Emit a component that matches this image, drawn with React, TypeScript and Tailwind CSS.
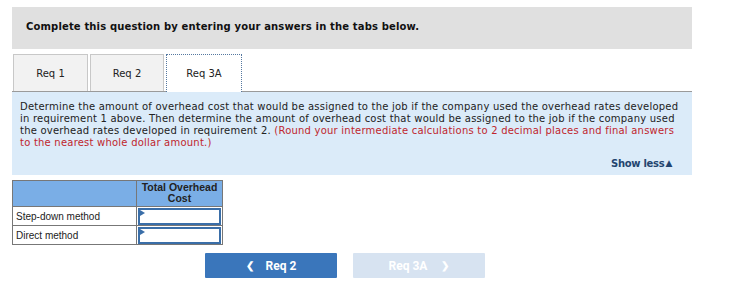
import React from "react";

export default function App() {
  const verdana = { fontFamily: '"DejaVu Sans", Verdana, sans-serif' };
  return (
    <div className="w-[730px] h-[288px] bg-white relative overflow-hidden">
      <div className="pt-[7px] pl-[12px] w-[692px]">
        <div className="h-[42px] bg-[#e0e0e0] flex items-center pl-[14px] pb-[4px]">
          <span className="text-[10px] font-bold text-[#111] tracking-[0.15px]" style={verdana}>
            Complete this question by entering your answers in the tabs below.
          </span>
        </div>
        <div className="mt-[5px] flex items-end h-[38px] border-b border-[#9a9a9a] pl-[1px] gap-[2px]">
          <div className="w-[75px] h-[37px] bg-[#f2f2f2] border border-b-0 border-[#c8c8c8] flex items-center justify-center text-[10px] text-[#222]" style={verdana}>Req 1</div>
          <div className="w-[74px] h-[37px] bg-[#f2f2f2] border border-b-0 border-[#c8c8c8] flex items-center justify-center text-[10px] text-[#222]" style={verdana}>Req 2</div>
          <div className="w-[76px] h-[38px] mb-[-1px] bg-white border border-b-0 border-dotted border-[#5578a0] flex items-center justify-center text-[10px] text-[#222]" style={verdana}>Req 3A</div>
        </div>
        <div className="bg-[#dbebf9] h-[83px] pl-[8px] pr-[10px] pt-[9px] relative">
          <p className="text-[10px] leading-[12px] text-[#222] tracking-[0.22px]" style={verdana}>
            Determine the amount of overhead cost that would be assigned to the job if the company used the overhead rates developed in requirement 1 above. Then determine the amount of overhead cost that would be assigned to the job if the company used the overhead rates developed in requirement 2.{" "}
            <span className="text-[#c0262d]">(Round your intermediate calculations to 2 decimal places and final answers to the nearest whole dollar amount.)</span>
          </p>
          <div className="absolute right-[20px] top-[64px] flex items-center text-[10px] font-bold text-[#23456f] tracking-[-0.3px]" style={verdana}>
            Show less<span className="text-[9px] ml-[1px]">▲</span>
          </div>
        </div>
        <div className="mt-[5px]">
          <table className="border-collapse text-[10px] text-[#222]" style={{ fontFamily: '"Liberation Sans", Arial, sans-serif' }}>
            <tbody>
              <tr className="h-[26px] bg-[#7aaee6]">
                <td className="w-[124px] border border-[#777]"></td>
                <td className="w-[86px] border border-[#777] text-center font-bold text-[10.5px] leading-[11px] align-top pt-[1px]">Total Overhead<br />Cost</td>
              </tr>
              <tr className="h-[19px]">
                <td className="border border-[#777] pl-[3px]">Step-down method</td>
                <td className="border border-[#777] p-0">
                  <div className="h-[17px] border-2 border-[#3a6ea8] mx-[1px] relative bg-white">
                    <span className="absolute left-0 top-0 w-0 h-0 border-t-[3px] border-b-[3px] border-l-[5px] border-t-transparent border-b-transparent border-l-[#3a6ea8]"></span>
                  </div>
                </td>
              </tr>
              <tr className="h-[19px]">
                <td className="border border-[#777] pl-[3px]">Direct method</td>
                <td className="border border-[#777] p-0">
                  <div className="h-[17px] border-2 border-[#3a6ea8] mx-[1px] relative bg-white">
                    <span className="absolute left-0 top-0 w-0 h-0 border-t-[3px] border-b-[3px] border-l-[5px] border-t-transparent border-b-transparent border-l-[#3a6ea8]"></span>
                  </div>
                </td>
              </tr>
            </tbody>
          </table>
        </div>
        <div className="mt-[8px] flex pl-[193px] gap-[16px]" style={{ fontFamily: 'Roboto, "Liberation Sans", sans-serif' }}>
          <div className="w-[132px] h-[25px] bg-[#3a76bb] rounded-[1px] flex items-center justify-center text-white text-[12px] font-bold">
            <span className="mr-[12px] text-[10px]">&#x276E;</span>Req 2
          </div>
          <div className="w-[132px] h-[25px] bg-[#d7e3f1] rounded-[1px] flex items-center justify-center text-white text-[12px] font-bold">
            Req 3A<span className="ml-[14px] text-[10px]">&#x276F;</span>
          </div>
        </div>
      </div>
    </div>
  );
}
